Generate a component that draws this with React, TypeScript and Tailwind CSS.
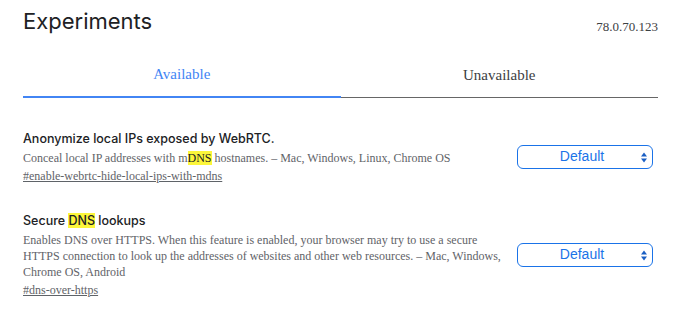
const serif = "font-['Liberation_Serif',_'Times_New_Roman',serif]";
const heading = "font-['Inter',_'Noto_Sans',sans-serif]";

function Hl({ children }: { children: string }) {
  return <span className="bg-[#fcf63a] text-[#202124]">{children}</span>;
}

function Select() {
  return (
    <div className="relative flex h-[24px] w-[136px] items-center justify-center rounded-[6px] border border-[#1a73e8] font-['Liberation_Sans',_Arial,sans-serif] text-[14px] text-[#1a73e8]">
      <span className="-ml-[6px]">Default</span>
      {/* up/down arrows */}
      <svg className="absolute right-[5px] top-[6px]" width="6" height="11" viewBox="0 0 6 11">
        <path d="M0 4.5 L3 0.5 L6 4.5 Z" fill="#1a5fc4" />
        <path d="M0 6.5 L3 10.5 L6 6.5 Z" fill="#1a5fc4" />
      </svg>
    </div>
  );
}

function Experiment({
  title,
  desc,
  link,
}: {
  title: React.ReactNode;
  desc: React.ReactNode;
  link: string;
}) {
  return (
    <div className="flex items-center justify-between">
      <div className="w-[488px]">
        <div className={`${heading} text-[12.5px] font-medium leading-[18px] text-[#202124]`}>{title}</div>
        <div className={`${serif} mt-[2px] text-[12px] leading-[16px] text-[#5f6368]`}>{desc}</div>
        <div className={`${serif} mt-[2px] text-[12px] leading-[16px] text-[#5f6368] underline`}>{link}</div>
      </div>
      <div className="mr-[5px]">
        <Select />
      </div>
    </div>
  );
}

export default function App() {
  return (
    <div className="h-[323px] w-[690px] bg-white pl-[23px] pr-[32px]">
      <div className="flex items-end justify-between pt-[5px]">
        <h1 className={`${heading} text-[22px] leading-[32px] font-normal text-[#202124]`}>Experiments</h1>
        <span className={`${serif} mb-[1px] text-[13px] text-[#3c4043]`}>78.0.70.123</span>
      </div>

      <div className={`${serif} mt-[26px] flex text-[15px]`}>
        <div className="flex-1 border-b-2 border-[#4285f4] pb-[9px] text-center text-[#4285f4]">Available</div>
        <div className="flex-1 border-b border-[#666] pb-[10px] pt-[1px] text-center text-[#3c4043]">Unavailable</div>
      </div>

      <div className="mt-[32px] flex flex-col gap-[28px]">
        <Experiment
          title="Anonymize local IPs exposed by WebRTC."
          desc={
            <>
              Conceal local IP addresses with m<Hl>DNS</Hl> hostnames. – Mac, Windows, Linux, Chrome OS
            </>
          }
          link="#enable-webrtc-hide-local-ips-with-mdns"
        />
        <Experiment
          title={
            <>
              Secure <Hl>DNS</Hl> lookups
            </>
          }
          desc="Enables DNS over HTTPS. When this feature is enabled, your browser may try to use a secure HTTPS connection to look up the addresses of websites and other web resources. – Mac, Windows, Chrome OS, Android"
          link="#dns-over-https"
        />
      </div>
    </div>
  );
}
